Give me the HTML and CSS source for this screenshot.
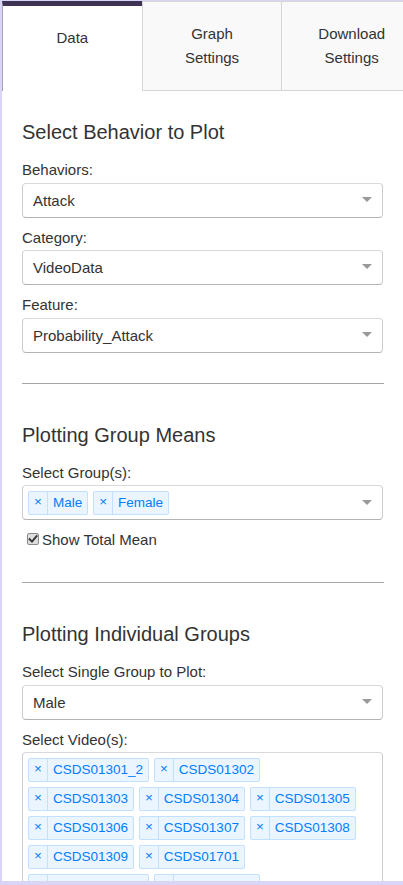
FILE: index.html
```html
<!DOCTYPE html>
<html>
<head>
<meta charset="utf-8">
<link rel="stylesheet" href="styles.css">
</head>
<body>
<div class="app">
  <div class="tabs">
    <div class="tab tab-active">Data</div>
    <div class="tab">Graph<br>Settings</div>
    <div class="tab">Download<br>Settings</div>
  </div>
  <div class="panel">
    <section class="section">
      <h3 class="heading heading-first">Select Behavior to Plot</h3>
      <div class="field">
        <label class="label">Behaviors:</label>
        <div class="select"><span class="value">Attack</span><span class="arrow"></span></div>
      </div>
      <div class="field">
        <label class="label">Category:</label>
        <div class="select"><span class="value">VideoData</span><span class="arrow"></span></div>
      </div>
      <div class="field">
        <label class="label">Feature:</label>
        <div class="select"><span class="value">Probability_Attack</span><span class="arrow"></span></div>
      </div>
    </section>
    <hr class="divider">
    <section class="section">
      <h3 class="heading">Plotting Group Means</h3>
      <div class="field">
        <label class="label">Select Group(s):</label>
        <div class="select multi">
          <div class="tags">
            <span class="tag"><span class="tag-x">×</span><span class="tag-label">Male</span></span>
            <span class="tag"><span class="tag-x">×</span><span class="tag-label">Female</span></span>
          </div>
          <span class="arrow"></span>
        </div>
      </div>
      <label class="check-row">
        <span class="checkbox"><svg width="10" height="10" viewBox="0 0 10 10"><path d="M1.6 5.2 L4 7.6 L8.6 2.2" fill="none" stroke="#333" stroke-width="1.9" stroke-linecap="square"/></svg></span>
        <span class="check-text">Show Total Mean</span>
      </label>
    </section>
    <hr class="divider">
    <section class="section">
      <h3 class="heading">Plotting Individual Groups</h3>
      <div class="field">
        <label class="label">Select Single Group to Plot:</label>
        <div class="select"><span class="value">Male</span><span class="arrow"></span></div>
      </div>
      <div class="field">
        <label class="label">Select Video(s):</label>
        <div class="select multi">
          <div class="tags">
            <span class="tag"><span class="tag-x">×</span><span class="tag-label">CSDS01301_2</span></span>
            <span class="tag"><span class="tag-x">×</span><span class="tag-label">CSDS01302</span></span>
            <span class="tag"><span class="tag-x">×</span><span class="tag-label">CSDS01303</span></span>
            <span class="tag"><span class="tag-x">×</span><span class="tag-label">CSDS01304</span></span>
            <span class="tag"><span class="tag-x">×</span><span class="tag-label">CSDS01305</span></span>
            <span class="tag"><span class="tag-x">×</span><span class="tag-label">CSDS01306</span></span>
            <span class="tag"><span class="tag-x">×</span><span class="tag-label">CSDS01307</span></span>
            <span class="tag"><span class="tag-x">×</span><span class="tag-label">CSDS01308</span></span>
            <span class="tag"><span class="tag-x">×</span><span class="tag-label">CSDS01309</span></span>
            <span class="tag"><span class="tag-x">×</span><span class="tag-label">CSDS01701</span></span>
            <span class="tag"><span class="tag-x">×</span><span class="tag-label">CSDS01701_2</span></span>
            <span class="tag"><span class="tag-x">×</span><span class="tag-label">CSDS01702</span></span>
            <span class="tag"><span class="tag-x">×</span><span class="tag-label">CSDS01703</span></span>
            <span class="tag"><span class="tag-x">×</span><span class="tag-label">CSDS01704</span></span>
            <span class="tag"><span class="tag-x">×</span><span class="tag-label">CSDS01705</span></span>
            <span class="tag"><span class="tag-x">×</span><span class="tag-label">CSDS01706</span></span>
            <span class="tag"><span class="tag-x">×</span><span class="tag-label">CSDS01707</span></span>
            <span class="tag"><span class="tag-x">×</span><span class="tag-label">CSDS01708</span></span>
            <span class="tag"><span class="tag-x">×</span><span class="tag-label">CSDS01709</span></span>
            <span class="tag"><span class="tag-x">×</span><span class="tag-label">CSDS01710</span></span>
            <span class="tag"><span class="tag-x">×</span><span class="tag-label">CSDS01711</span></span>
            <span class="tag"><span class="tag-x">×</span><span class="tag-label">CSDS01712</span></span>
            <span class="tag"><span class="tag-x">×</span><span class="tag-label">CSDS01713</span></span>
            <span class="tag"><span class="tag-x">×</span><span class="tag-label">CSDS01714</span></span>
            <span class="tag"><span class="tag-x">×</span><span class="tag-label">CSDS01715</span></span>
            <span class="tag"><span class="tag-x">×</span><span class="tag-label">CSDS01716</span></span>
            <span class="tag"><span class="tag-x">×</span><span class="tag-label">CSDS01717</span></span>
            <span class="tag"><span class="tag-x">×</span><span class="tag-label">CSDS01718</span></span>
            <span class="tag"><span class="tag-x">×</span><span class="tag-label">CSDS01719</span></span>
            <span class="tag"><span class="tag-x">×</span><span class="tag-label">CSDS01720</span></span>
            <span class="tag"><span class="tag-x">×</span><span class="tag-label">CSDS01721</span></span>
            <span class="tag"><span class="tag-x">×</span><span class="tag-label">CSDS01722</span></span>
            <span class="tag"><span class="tag-x">×</span><span class="tag-label">CSDS01723</span></span>
            <span class="tag"><span class="tag-x">×</span><span class="tag-label">CSDS01724</span></span>
            <span class="tag"><span class="tag-x">×</span><span class="tag-label">CSDS01725</span></span>
          </div>
          <span class="arrow"></span>
        </div>
      </div>
    </section>
  </div>
</div>
</body>
</html>
```

FILE: styles.css
```css
html, body {
  margin: 0;
  height: 100%;
  overflow: hidden;
}

body {
  box-sizing: border-box;
  padding: 1px 0 0 2px;
  background: #dad4f5;
  font-family: "Liberation Sans", Arial, sans-serif;
  color: #333;
}

.app {
  height: 880px;
  display: flex;
  flex-direction: column;
  overflow: hidden;
}

.tabs {
  flex: none;
  display: flex;
  height: 90px;
  overflow: hidden;
}

.tab {
  flex: none;
  width: 139.7px;
  box-sizing: border-box;
  border: 1px solid #d6d6d6;
  border-right: none;
  background: #f9f9f9;
  padding-top: 20px;
  text-align: center;
  font-size: 15px;
  line-height: 24px;
  color: #333;
}

.tab-active {
  background: #fff;
  border-top: 5px solid #3e3355;
  border-bottom: none;
  border-left-color: #a8a6b4;
}

.panel {
  flex: 1;
  min-height: 0;
  display: flex;
  flex-direction: column;
  background: #fff;
  padding: 0 19px 0 20px;
  overflow: hidden;
}

.section {
  flex: none;
  display: flex;
  flex-direction: column;
}

.heading {
  font-size: 20px;
  font-weight: normal;
  line-height: 22px;
  margin: 0 0 17px;
}

.heading-first {
  margin-top: 30px;
}

.field {
  margin-bottom: 10px;
}

.label {
  display: block;
  font-size: 15px;
  line-height: 20px;
  margin-bottom: 2.5px;
}

.select {
  box-sizing: border-box;
  height: 35px;
  margin-right: 1px;
  display: flex;
  align-items: center;
  padding: 0 10px;
  border: 1px solid #ccc;
  border-color: #d9d9d9 #ccc #b3b3b3;
  border-radius: 4px;
  background: #fff;
  font-size: 15px;
}

.value {
  flex: 1;
}

.arrow {
  flex: none;
  width: 0;
  height: 0;
  border-style: solid;
  border-width: 5px 5px 2.5px;
  border-color: #999 transparent transparent;
}

.select.multi {
  height: auto;
  padding: 5px 10px 4px 5px;
}

.tags {
  flex: 1;
  display: flex;
  flex-wrap: wrap;
  gap: 5px;
}

.tag {
  display: flex;
  border: 1px solid #c2e0ff;
  border-radius: 2px;
  background: #ebf5ff;
  color: #007eff;
  font-size: 13.5px;
  line-height: 18px;
}

.tag-x {
  padding: 1px 5px 3px;
  border-right: 1px solid #c2e0ff;
}

.tag-label {
  padding: 2px 5px;
}

.check-row {
  display: flex;
  align-items: flex-start;
  padding-left: 5px;
  margin-bottom: 12px;
  font-size: 15px;
  line-height: 20px;
}

.checkbox {
  box-sizing: border-box;
  width: 12px;
  height: 12px;
  margin-top: 3px;
  margin-right: 3px;
  display: flex;
  align-items: center;
  justify-content: center;
  border: 1px solid #8a8a8a;
  border-radius: 2px;
  background: #dedede;
}

.divider {
  flex: none;
  width: 100%;
  border: 0;
  border-top: 1px solid #a6a6a6;
  margin: 20px 0 40px;
}
```
